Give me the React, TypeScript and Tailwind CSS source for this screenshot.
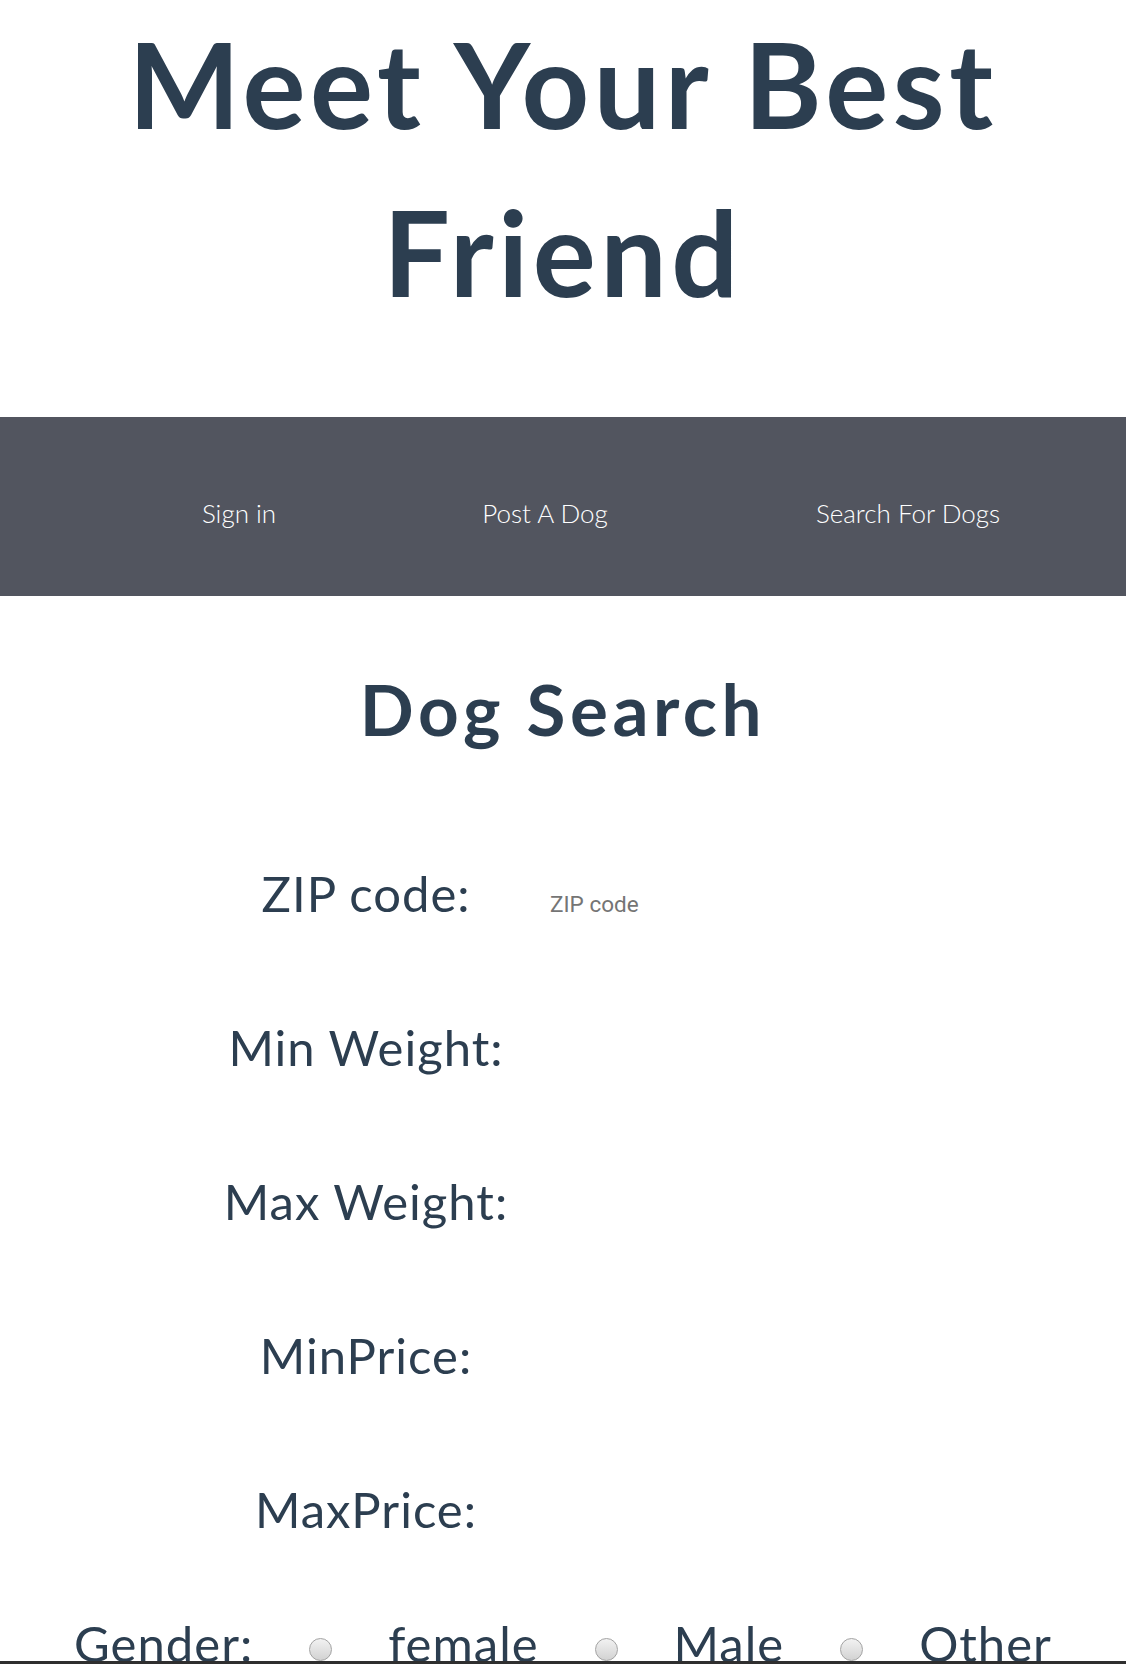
import React from 'react'

const labelFont = { fontFamily: 'Lato, "Open Sans", sans-serif' }

function Row({ label, placeholder }: { label: string; placeholder?: string }) {
  return (
    <div className="flex items-baseline h-[49px] pl-[216px]">
      <label className="w-[300px] text-center text-[49px] leading-[49px] tracking-[1px] text-[#2c3e50]">{label}</label>
      <input
        type="text"
        placeholder={placeholder}
        className="ml-[32px] w-[300px] px-[2px] text-[22.5px] outline-none bg-transparent placeholder:text-[#757575] text-[#333]"
        style={{ fontFamily: 'Roboto, "Liberation Sans", sans-serif' }}
      />
    </div>
  )
}

function Radio({ name }: { name: string }) {
  return (
    <input
      type="radio"
      name={name}
      className="appearance-none w-[23px] h-[23px] rounded-full border border-[#a3a3a3] bg-gradient-to-b from-[#f2f2f2] to-[#d2d2d2] shrink-0 mt-[19px]"
    />
  )
}

export default function App() {
  return (
    <main className="relative h-[1664px] overflow-hidden bg-white" style={labelFont}>
      <h1 className="text-center text-[118px] leading-[168px] font-bold tracking-[4.5px] text-[#2c3e50] m-0">
        Meet Your Best
        <br />
        Friend
      </h1>

      {/* Nav bar */}
      <nav className="mt-[81px] h-[179px] bg-[#52555f] pt-[80px]">
        <ul className="flex text-white text-[26px] leading-[32px] font-light">
          <li className="ml-[139px] w-[200px] text-center">Sign in</li>
          <li className="ml-[56px] w-[300px] text-center">Post A Dog</li>
          <li className="ml-[63px] w-[300px] text-center">Search For Dogs</li>
        </ul>
      </nav>

      <h2 className="mt-[77px] text-center text-[71px] leading-[71px] font-bold tracking-[4.5px] text-[#2c3e50]">Dog Search</h2>

      <form className="mt-[125px] flex flex-col gap-[105px]">
        <Row label="ZIP code:" placeholder="ZIP code" />
        <Row label="Min Weight:" />
        <Row label="Max Weight:" />
        <Row label="MinPrice:" />
        <Row label="MaxPrice:" />
      </form>

      <div className="mt-[85px] flex justify-center items-start gap-[56px] text-[49px] leading-[49px] tracking-[1px] text-[#2c3e50]">
        <span>Gender:</span>
        <Radio name="gender" />
        <span>female</span>
        <Radio name="gender" />
        <span>Male</span>
        <Radio name="gender" />
        <span>Other</span>
      </div>

      {/* bottom edge */}
      <div className="absolute left-0 right-0 bottom-0 h-[3px] bg-[#2f2f2f]" />
    </main>
  )
}
